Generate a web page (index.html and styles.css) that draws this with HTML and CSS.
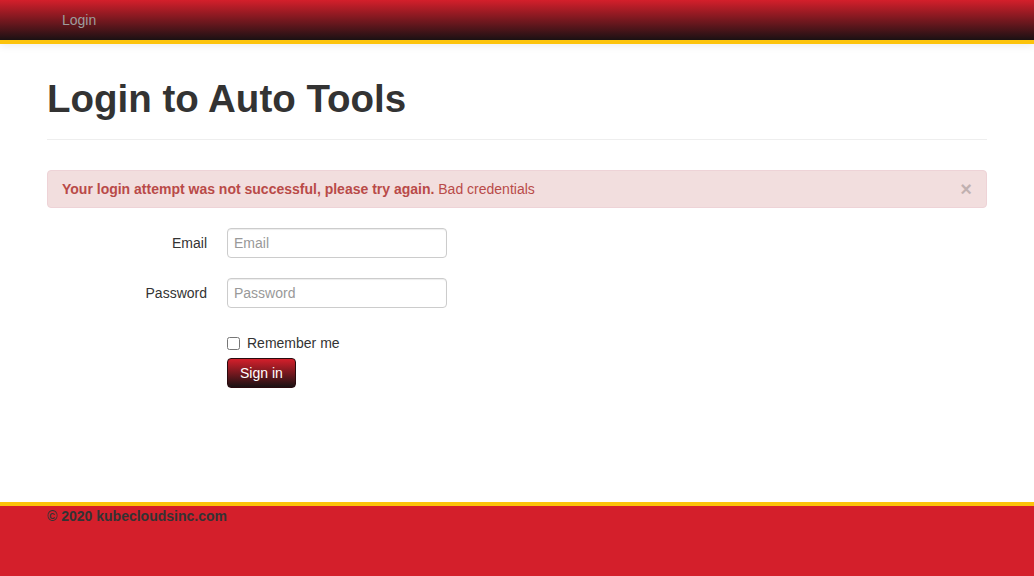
FILE: index.html
```html
<!DOCTYPE html>
<html>
<head>
<meta charset="utf-8">
<title>Login to Auto Tools</title>
<link rel="stylesheet" href="styles.css">
</head>
<body>
<div class="page">
  <header class="navbar">
    <div class="container">
      <nav class="nav">
        <a class="nav-link" href="#">Login</a>
      </nav>
    </div>
  </header>

  <main class="container main">
    <div class="page-header">
      <h1>Login to Auto Tools</h1>
    </div>

    <div class="alert">
      <span class="close">&times;</span>
      <strong>Your login attempt was not successful, please try again.</strong> Bad credentials
    </div>

    <form class="form-horizontal">
      <div class="control-group">
        <label class="control-label" for="email">Email</label>
        <div class="controls">
          <input type="text" id="email" placeholder="Email">
        </div>
      </div>
      <div class="control-group">
        <label class="control-label" for="password">Password</label>
        <div class="controls">
          <input type="password" id="password" placeholder="Password">
        </div>
      </div>
      <div class="control-group">
        <div class="control-label"></div>
        <div class="controls">
          <label class="checkbox"><input type="checkbox"> Remember me</label>
          <button type="button" class="btn">Sign in</button>
        </div>
      </div>
    </form>
  </main>

  <footer class="footer">
    <div class="container">
      <p>&copy; 2020 kubecloudsinc.com</p>
    </div>
  </footer>
</div>
</body>
</html>
```

FILE: styles.css
```css
* { box-sizing: border-box; }
html, body { margin: 0; padding: 0; }
body {
  font-family: "Liberation Sans", Arial, Helvetica, sans-serif;
  font-size: 14px;
  line-height: 20px;
  color: #333;
  background: #fff;
}
.page {
  min-height: 100vh;
  display: flex;
  flex-direction: column;
}
.container {
  width: 940px;
  margin: 0 auto;
}
.navbar {
  height: 44px;
  background: linear-gradient(to bottom, #d41f2b 0%, #1a1113 100%);
  border-bottom: 4px solid #fcc30b;
  box-shadow: 0 2px 8px rgba(0,0,0,0.08);
  position: relative;
  z-index: 1;
}
.nav { display: flex; }
.nav-link {
  display: block;
  padding: 10px 15px;
  color: #9d9d9d;
  text-decoration: none;
}
.main { flex: 1; }
.page-header {
  margin-top: 33px;
  padding-bottom: 18px;
  border-bottom: 1px solid #eee;
}
.page-header h1 {
  margin: 0;
  font-size: 38.5px;
  line-height: 44px;
  font-weight: bold;
  color: #333;
}
.alert {
  margin-top: 30px;
  padding: 8px 35px 8px 14px;
  line-height: 20px;
  background: #f2dede;
  border: 1px solid #eed3d7;
  border-radius: 4px;
  color: #b94a48;
}
.alert strong { font-weight: bold; }
.close {
  float: right;
  margin-right: -21px;
  font-size: 20px;
  font-weight: bold;
  line-height: 20px;
  color: #000;
  opacity: 0.2;
}
.form-horizontal { margin-top: 20px; }
.control-group {
  display: flex;
  margin-bottom: 20px;
}
.control-label {
  width: 160px;
  flex: none;
  padding-top: 5px;
  text-align: right;
}
.controls {
  margin-left: 20px;
  display: flex;
  flex-direction: column;
  align-items: flex-start;
}
.controls input[type=text],
.controls input[type=password] {
  width: 220px;
  height: 30px;
  padding: 4px 6px;
  font-family: inherit;
  font-size: 14px;
  line-height: 20px;
  color: #555;
  border: 1px solid #ccc;
  border-radius: 4px;
  box-shadow: inset 0 1px 1px rgba(0,0,0,0.075);
  outline: none;
}
.controls input::placeholder { color: #999; }
.checkbox {
  display: flex;
  align-items: center;
  margin-top: 5px;
  margin-bottom: 5px;
  min-height: 20px;
}
.checkbox input {
  margin: 0 7px 0 0;
  width: 13px;
  height: 13px;
}
.btn {
  height: 30px;
  padding: 4px 12px;
  font-family: inherit;
  font-size: 14px;
  line-height: 20px;
  color: #fff;
  background: linear-gradient(to bottom, #d41f2b 0%, #1a1113 100%);
  border: 1px solid #2a0a0e;
  border-radius: 4px;
  cursor: pointer;
}
.footer {
  height: 74px;
  flex: none;
  background: #d41f2b;
  border-top: 4px solid #fcc30b;
}
.footer p {
  margin: 0;
  font-weight: bold;
  color: #333;
}
```
